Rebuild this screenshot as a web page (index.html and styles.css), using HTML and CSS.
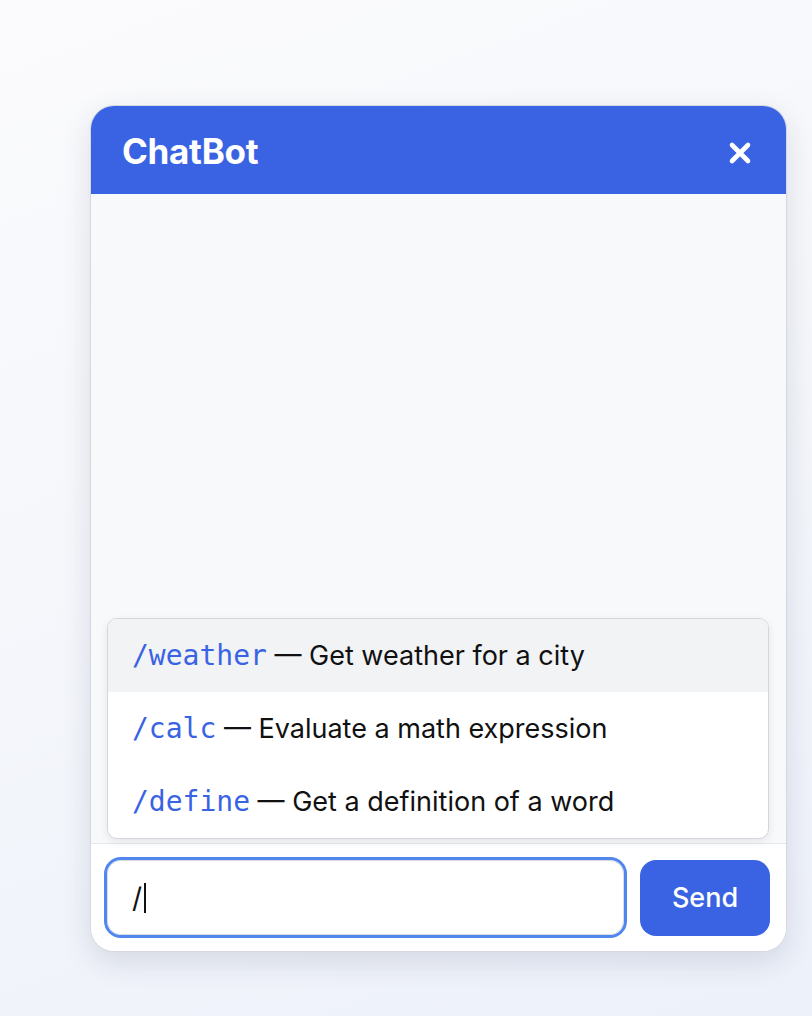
FILE: index.html
```html
<!DOCTYPE html>
<html lang="en">
<head>
<meta charset="utf-8">
<title>ChatBot</title>
<link rel="stylesheet" href="styles.css">
</head>
<body>
  <div class="chat">
    <header class="chat-header">
      <h1 class="chat-title">ChatBot</h1>
      <button class="close-btn" aria-label="Close">
        <svg width="24" height="24" viewBox="0 0 24 24"><path d="M4 4 L20 20 M20 4 L4 20" stroke="#fff" stroke-width="4.6" stroke-linecap="round"/></svg>
      </button>
    </header>
    <div class="chat-messages">
      <ul class="commands">
        <li class="command active"><code>/weather</code> — Get weather for a city</li>
        <li class="command"><code>/calc</code> — Evaluate a math expression</li>
        <li class="command"><code>/define</code> — Get a definition of a word</li>
      </ul>
    </div>
    <form class="chat-footer">
      <div class="chat-input"><span>/</span><span class="caret"></span></div>
      <button type="button" class="send-btn">Send</button>
    </form>
  </div>
</body>
</html>
```
FILE: styles.css
```css
* { box-sizing: border-box; }
html, body { margin: 0; height: 100%; }
body {
  font-family: Inter, "Noto Sans", "Liberation Sans", sans-serif;
  background: linear-gradient(160deg, #fbfbfd 0%, #f5f7fb 45%, #edf1fa 100%);
  padding: 105px 0 0 90px;
}
.chat {
  width: 697px;
  height: 847px;
  display: flex;
  flex-direction: column;
  border: 1px solid #d5d8de;
  border-radius: 24px;
  background: #f8f9fb;
  overflow: hidden;
  box-shadow: 0 10px 30px rgba(30, 40, 70, 0.13);
}
.chat-header {
  height: 88px;
  flex: none;
  background: #3a63e4;
  display: flex;
  align-items: center;
  justify-content: space-between;
  padding: 2px 34px 0 31px;
}
.chat-title {
  margin: 0;
  color: #fff;
  font-size: 35px;
  font-weight: 700;
  letter-spacing: -0.3px;
}
.close-btn {
  border: 0;
  background: none;
  padding: 0;
  display: flex;
  margin-top: 4px;
}
.chat-messages {
  flex: 1;
  position: relative;
}
.commands {
  position: absolute;
  left: 16px;
  right: 17px;
  bottom: 4px;
  margin: 0;
  padding: 0;
  list-style: none;
  background: #fff;
  border: 1px solid #d3d6dc;
  border-radius: 10px;
  overflow: hidden;
  box-shadow: 0 3px 10px rgba(0, 0, 0, 0.08);
}
.command {
  height: 73px;
  display: flex;
  align-items: center;
  padding-left: 24px;
  font-size: 27px;
  color: #111;
  white-space: pre;
}
.command.active { background: #f2f3f5; }
.command code {
  font-family: "DejaVu Sans Mono", "Liberation Mono", monospace;
  font-size: 28px;
  color: #3a63e4;
}
.chat-footer {
  flex: none;
  margin: 0;
  border-top: 1px solid #e5e7eb;
  background: #fff;
  display: flex;
  align-items: center;
  gap: 16px;
  padding: 16px;
  height: 108px;
}
.chat-input {
  flex: 1;
  height: 75px;
  border: 1px solid #dadde2;
  border-radius: 14px;
  outline: 3px solid #5086ee;
  background: #fff;
  display: flex;
  align-items: center;
  padding-left: 24px;
  font-size: 28px;
  color: #111;
}
.caret {
  display: inline-block;
  width: 2px;
  height: 30px;
  background: #111;
  margin-left: 2px;
}
.send-btn {
  flex: none;
  width: 130px;
  height: 76px;
  border: 0;
  border-radius: 16px;
  background: #3a63e4;
  color: #fff;
  font-family: inherit;
  font-size: 27px;
  font-weight: 500;
}
```
